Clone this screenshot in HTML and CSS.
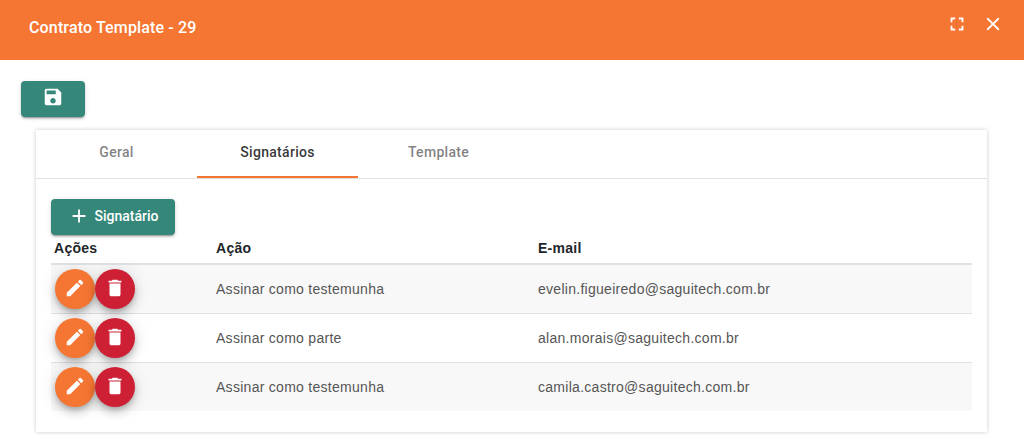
FILE: index.html
```html
<!DOCTYPE html>
<html lang="pt-BR">
<head>
<meta charset="utf-8">
<title>Contrato Template - 29</title>
<link rel="stylesheet" href="styles.css">
</head>
<body>
<header class="topbar">
  <h1 class="title">Contrato Template - 29</h1>
  <div class="topbar-actions">
    <button class="icon-btn" aria-label="Tela cheia">
      <svg class="icon-22" viewBox="0 0 24 24"><path d="M7 14H5v5h5v-2H7v-3zm-2-4h2V7h3V5H5v5zm12 7h-3v2h5v-5h-2v3zM14 5v2h3v3h2V5h-5z"/></svg>
    </button>
    <button class="icon-btn" aria-label="Fechar">
      <svg class="icon-22" viewBox="0 0 24 24"><path d="M19 6.41 17.59 5 12 10.59 6.41 5 5 6.41 10.59 12 5 17.59 6.41 19 12 13.41 17.59 19 19 17.59 13.41 12z"/></svg>
    </button>
  </div>
</header>
<main class="content">
  <button class="raised save-btn" aria-label="Salvar">
    <svg class="icon-22" viewBox="0 0 24 24"><path d="M17 3H5c-1.11 0-2 .9-2 2v14c0 1.1.89 2 2 2h14c1.1 0 2-.9 2-2V7l-4-4zm-5 16c-1.66 0-3-1.34-3-3s1.34-3 3-3 3 1.34 3 3-1.34 3-3 3zm3-10H5V5h10v4z"/></svg>
  </button>
  <section class="card">
    <nav class="tabs">
      <div class="tab">Geral</div>
      <div class="tab tab-active">Signatários</div>
      <div class="tab">Template</div>
    </nav>
    <div class="card-body">
      <button class="raised add-btn">
        <svg class="icon-22" viewBox="0 0 24 24"><path d="M19 13h-6v6h-2v-6H5v-2h6V5h2v6h6v2z"/></svg>
        <span>Signatário</span>
      </button>
      <table class="grid">
        <thead>
          <tr><th class="col-actions">Ações</th><th class="col-action">Ação</th><th>E-mail</th></tr>
        </thead>
        <tbody>
          <tr>
            <td class="cell-actions"><div class="fabs">
              <button class="fab fab-edit" aria-label="Editar"><svg class="icon-22" viewBox="0 0 24 24"><path d="M3 17.25V21h3.75L17.81 9.94l-3.75-3.75L3 17.25zM20.71 7.04a1 1 0 0 0 0-1.41l-2.34-2.34a1 1 0 0 0-1.41 0l-1.83 1.83 3.75 3.75 1.83-1.83z"/></svg></button>
              <button class="fab fab-delete" aria-label="Excluir"><svg class="icon-22" viewBox="0 0 24 24"><path d="M6 19c0 1.1.9 2 2 2h8c1.1 0 2-.9 2-2V7H6v12zM19 4h-3.5l-1-1h-5l-1 1H5v2h14V4z"/></svg></button>
            </div></td>
            <td>Assinar como testemunha</td>
            <td>evelin.figueiredo@saguitech.com.br</td>
          </tr>
          <tr>
            <td class="cell-actions"><div class="fabs">
              <button class="fab fab-edit" aria-label="Editar"><svg class="icon-22" viewBox="0 0 24 24"><path d="M3 17.25V21h3.75L17.81 9.94l-3.75-3.75L3 17.25zM20.71 7.04a1 1 0 0 0 0-1.41l-2.34-2.34a1 1 0 0 0-1.41 0l-1.83 1.83 3.75 3.75 1.83-1.83z"/></svg></button>
              <button class="fab fab-delete" aria-label="Excluir"><svg class="icon-22" viewBox="0 0 24 24"><path d="M6 19c0 1.1.9 2 2 2h8c1.1 0 2-.9 2-2V7H6v12zM19 4h-3.5l-1-1h-5l-1 1H5v2h14V4z"/></svg></button>
            </div></td>
            <td>Assinar como parte</td>
            <td>alan.morais@saguitech.com.br</td>
          </tr>
          <tr>
            <td class="cell-actions"><div class="fabs">
              <button class="fab fab-edit" aria-label="Editar"><svg class="icon-22" viewBox="0 0 24 24"><path d="M3 17.25V21h3.75L17.81 9.94l-3.75-3.75L3 17.25zM20.71 7.04a1 1 0 0 0 0-1.41l-2.34-2.34a1 1 0 0 0-1.41 0l-1.83 1.83 3.75 3.75 1.83-1.83z"/></svg></button>
              <button class="fab fab-delete" aria-label="Excluir"><svg class="icon-22" viewBox="0 0 24 24"><path d="M6 19c0 1.1.9 2 2 2h8c1.1 0 2-.9 2-2V7H6v12zM19 4h-3.5l-1-1h-5l-1 1H5v2h14V4z"/></svg></button>
            </div></td>
            <td>Assinar como testemunha</td>
            <td>camila.castro@saguitech.com.br</td>
          </tr>
        </tbody>
      </table>
    </div>
  </section>
</main>
</body>
</html>
```
FILE: styles.css
```css
* { box-sizing: border-box; }
html, body { margin: 0; height: 100%; }
body { background: #fff; font-family: Roboto, sans-serif; color: #212529; overflow: hidden; }
svg { fill: currentColor; display: block; }
button { border: 0; padding: 0; font: inherit; cursor: pointer; }
.icon-22 { width: 22px; height: 22px; }

.topbar { height: 60px; background: #f57632; color: #fff; display: flex; align-items: center; justify-content: space-between; padding: 0 20px 4px 29px; }
.title { margin: 0; font-size: 16px; font-weight: 500; line-height: 24px; letter-spacing: .15px; }
.topbar-actions { display: flex; align-items: center; gap: 14px; margin-bottom: 8px; }
.icon-btn { background: none; color: #fff; display: flex; align-items: center; }

.content { padding: 21px 37px 0 21px; }
.raised { background: #348779; color: #fff; border-radius: 4px; display: flex; align-items: center; justify-content: center; box-shadow: 0 3px 1px -2px rgba(0,0,0,.2), 0 2px 2px 0 rgba(0,0,0,.14), 0 1px 5px 0 rgba(0,0,0,.12); }
.save-btn { width: 64px; height: 36px; padding-bottom: 4px; }

.card { margin: 13px 0 0 15px; height: 302px; background: #fff; box-shadow: 0 0 4px rgba(0,0,0,.22); }
.tabs { display: flex; height: 49px; border-bottom: 1px solid #e0e0e0; }
.tab { width: 161px; height: 48px; display: flex; align-items: center; justify-content: center; font-size: 14px; font-weight: 500; letter-spacing: .3px; color: rgba(0,0,0,.5); padding-bottom: 4px; }
.tab-active { color: rgba(0,0,0,.8); border-bottom: 2px solid #f57632; padding-bottom: 2px; }

.card-body { padding: 20px 15px 0; }
.add-btn { width: 124px; height: 36px; font-size: 14px; font-weight: 500; gap: 5px; padding-bottom: 3px; }

.grid { width: 921px; border-collapse: collapse; table-layout: fixed; font-family: "Liberation Sans", Arial, sans-serif; font-size: 14px; letter-spacing: .28px; }
.col-actions { width: 161px; }
.col-action { width: 322px; }
.grid th { height: 29px; padding: 0 3px 2px; text-align: left; font-weight: 700; color: #212529; border-bottom: 2px solid #dee2e6; }
.grid th + th, .grid td + td { padding-left: 4px; }
.grid td { height: 49px; padding: 0 3px; color: #555; border-bottom: 1px solid #dee2e6; }
.grid tbody tr:nth-child(odd) { background: #f8f8f8; }
.grid tbody tr:last-child td { border-bottom: 0; }
.grid .cell-actions { padding: 0 3px 0 4px; }
.fabs { display: flex; }
.fab { width: 40px; height: 40px; border-radius: 50%; color: #fff; display: flex; align-items: center; justify-content: center; padding-bottom: 2px; box-shadow: 0 3px 5px -1px rgba(0,0,0,.2), 0 6px 10px 0 rgba(0,0,0,.14), 0 1px 18px 0 rgba(0,0,0,.12); }
.fab-edit { background: #f57632; }
.fab-delete { background: #cd2034; }
```
